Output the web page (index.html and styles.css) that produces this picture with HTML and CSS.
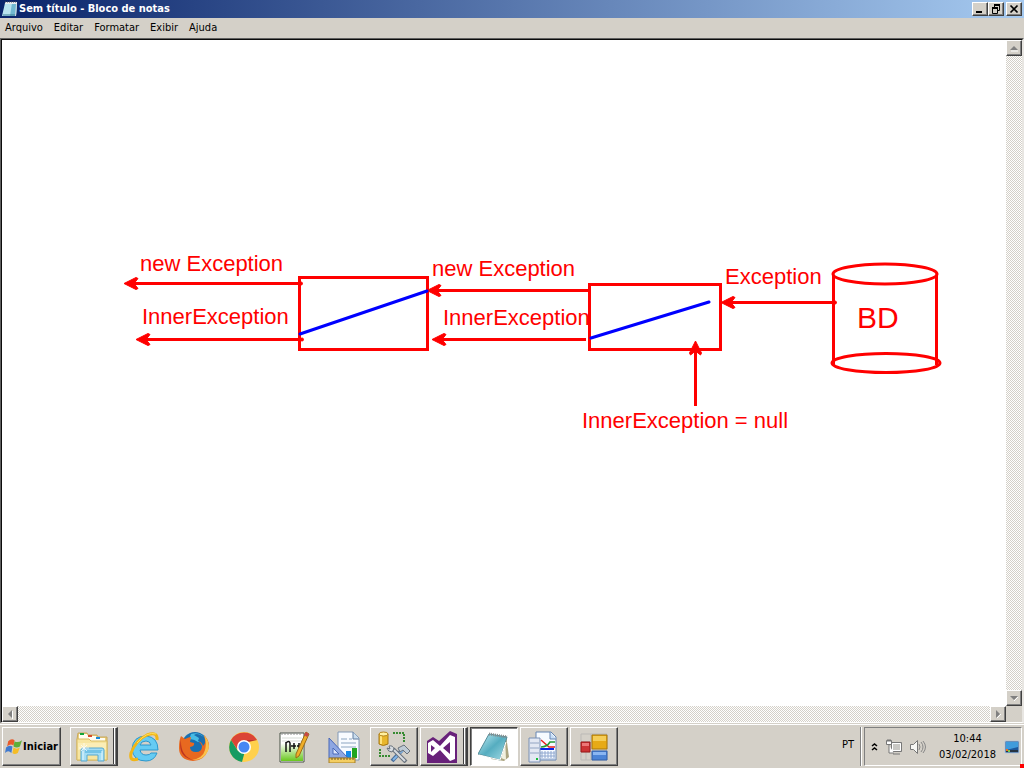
FILE: index.html
```html
<!DOCTYPE html>
<html lang="pt">
<head>
<meta charset="utf-8">
<title>Sem título - Bloco de notas</title>
<link rel="stylesheet" href="styles.css">
</head>
<body>
<main class="window">
  <header class="titlebar">
    <svg class="title-icon" viewBox="0 0 16 16" aria-hidden="true"><path d="M3 2h12l-1 13H0z" fill="#b9e3ee"/><path d="M10 2h5l-1 13H8z" fill="#72b9d0"/><path d="M1 14h13" stroke="#397b91"/><path d="M3 2h12" stroke="#e9edf0" stroke-width="2"/><path d="M3 1h12" stroke="#555" stroke-dasharray="1 1"/><path d="M14.500 3l-1 12" stroke="#d5dce0"/></svg>
    <h1 class="title">Sem título - Bloco de notas</h1>
    <div class="controls">
      <button class="bevel control" aria-label="Minimizar"><svg viewBox="0 0 12 10"><path d="M2 8h6" stroke="#000" stroke-width="2"/></svg></button>
      <button class="bevel control" aria-label="Restaurar"><svg viewBox="0 0 12 10"><path d="M4 1h6M2 4h6" stroke="#000" stroke-width="2"/><path d="M4.500 2v1M9.500 1v5.500H8M2.500 4v5.500h5V4" fill="none" stroke="#000"/></svg></button>
      <button class="bevel control close" aria-label="Fechar"><svg viewBox="0 0 12 10"><path d="M2.500 1.500l7 7m0-7l-7 7" stroke="#000" stroke-width="1.700"/></svg></button>
    </div>
  </header>
  <nav class="menu" aria-label="Menu">
    <button>Arquivo</button><button>Editar</button><button>Formatar</button><button>Exibir</button><button>Ajuda</button>
  </nav>
  <section class="editor">
    <textarea class="text" aria-label="Texto"></textarea>
    <div class="scroll vertical">
      <button class="bevel arrow" aria-label="Para cima"><svg viewBox="0 0 12 12"><path d="M3 9h7" stroke="#fff"/><path d="M2 8l4-4 4 4z" fill="#808080"/></svg></button>
      <button class="bevel arrow" aria-label="Para baixo"><svg viewBox="0 0 12 12"><path d="M6 9l4-4" stroke="#fff"/><path d="M2 4h8L6 8z" fill="#808080"/></svg></button>
    </div>
    <div class="scroll horizontal">
      <button class="bevel arrow" aria-label="Para a esquerda"><svg viewBox="0 0 12 12"><path d="M8.500 3v8" stroke="#fff"/><path d="M8 2v8L4 6z" fill="#808080"/></svg></button>
      <button class="bevel arrow" aria-label="Para a direita"><svg viewBox="0 0 12 12"><path d="M5 10l4-4" stroke="#fff"/><path d="M4 2v8l4-4z" fill="#808080"/></svg></button>
    </div>
  </section>
</main>

<svg class="drawing" viewBox="0 0 1024 768" preserveAspectRatio="xMinYMin meet" role="img" aria-label="Fluxo de exceções">
  <g class="red-line">
    <path d="M299.500 277.500h128v72h-128zM589.500 284.500h131v65h-131z"/>
    <path d="M129 283.500h172M141 339.500h161M433 290.500h156M437 339.500h149M727 302.500h108M695.500 406v-58"/>
    <path d="M833.500 275v91M936.500 275v90"/>
    <ellipse cx="885" cy="274" rx="52" ry="10"/>
    <ellipse cx="886" cy="363" rx="54" ry="9.500"/>
  </g>
  <g class="heads">
    <path id="head" d="M124 283.500l12-6 2 1-4 5 4 5-2 1z"/>
    <use href="#head" x="12" y="56"/>
    <use href="#head" x="303" y="7"/>
    <use href="#head" x="308" y="56"/>
    <use href="#head" x="597" y="19"/>
    <path d="M695.500 341l-6 12 1 2 5-4 5 4 1-2z"/>
    <circle cx="301" cy="283.500" r="1.500"/><circle cx="302" cy="339.500" r="1.500"/><circle cx="835" cy="302.500" r="1.500"/>
  </g>
  <path class="blue-line" d="M300 334l127-43M591 338l118-36"/>
  <g class="labels">
    <text x="140" y="271">new Exception</text>
    <text x="142" y="324">InnerException</text>
    <text x="432" y="276">new Exception</text>
    <text x="443" y="325">InnerException</text>
    <text x="725" y="284">Exception</text>
    <text x="582" y="428">InnerException = null</text>
    <text class="database" x="857" y="328">BD</text>
  </g>
</svg>

<footer class="taskbar">
  <button class="bevel start"><svg viewBox="0 0 16 16" aria-hidden="true"><path d="M3 3q3-3 6-1L8 7Q5 5 2 8z" fill="#e75a2b"/><path d="M9 3q3 2 7-1l-2 6q-3 2-6 0z" fill="#5cae38"/><path d="M1 9q3-3 6-1l-1 6Q3 11 0 14z" fill="#3f79cf"/><path d="M8 9q3 2 6 0l-2 5q-3 2-5 0z" fill="#f5bd27"/></svg>Iniciar</button>
  <div class="apps">
    <button class="bevel app stacked" aria-label="Explorador"><svg viewBox="0 0 32 32"><path d="M1 8l1-6h9l1 2h9l1 2h9v23H1z" fill="#e9cf7d" stroke="#c9a85b"/><path d="M3 3h8l1 2h8l1 2h8v3H3z" fill="#fffdf2"/><path d="M4 2h4v2H4z" fill="#13a538"/><path d="M12 4h4v2h-4z" fill="#d84b2b"/><path d="M20 6h4v2h-4z" fill="#1589da"/><path d="M1 8h12l2 2h16v19H1z" fill="#f7e5a0" stroke="#d9bb63"/><path d="M2 12h28v7H2z" fill="#fbedb6"/><path d="M5 30V19q0-2 2-2h19q2 0 2 2v11h-6v-6H11v6z" fill="#a4ddf4" stroke="#56a8d0"/><path d="M7 19h19v3H7z" fill="#72c3e7"/><path d="M7 20v9M26 20v9" stroke="#e3f8ff"/><path d="M8 12v10M3 17h10M5 14l6 6m0-6l-6 6" stroke="#fff" stroke-width=".7"/></svg></button>
    <button class="app plain" aria-label="Internet Explorer"><svg viewBox="0 0 32 32"><path d="M30 19H12q1 5 6 5 4 0 5-2h6q-3 8-11 8Q5 30 4 18 5 5 18 5q12 1 12 14zM12 14h11q-1-4-5-4-5 0-6 4z" fill="#65cbf3" stroke="#2c97cc"/><path d="M29 9q1-9-10-5Q8 9 3 22q-2 9 7 6" fill="none" stroke="#f1b516" stroke-width="3"/><path d="M28 3q-9-3-19 9" fill="none" stroke="#ffdf59"/></svg></button>
    <button class="app plain" aria-label="Firefox"><svg viewBox="0 0 32 32"><circle cx="17" cy="14" r="13" fill="#1770b2"/><path d="M13 3q10-3 15 6l-8 2q-6-4-9-2z" fill="#47bce5"/><path d="M3 5l4 3q4-2 6-2l-1 5 4 1q1 3-4 4 0 5 6 5 6 0 6-6-1-3-3-4 7-1 5-7 7 7 4 15-4 11-15 11Q1 29 1 17 1 9 3 5z" fill="#e86920"/><path d="M20 10q4 1 5 5 4-4 1-9-7-5-10-2l5 3z" fill="#1b6eae"/><path d="M26 4q7 8 4 16-5 10-16 9 11-2 13-10 2-8-1-15z" fill="#fac24b"/><path d="M3 8q-4 18 12 21Q2 25 3 8z" fill="#bd3320"/></svg></button>
    <button class="app plain" aria-label="Chrome"><svg viewBox="0 0 32 32"><circle cx="16" cy="16" r="15" fill="#ffd04c"/><path d="M3 9a15 15 0 0 1 26 0H16L9 18z" fill="#db4437"/><path d="M3 9l7 11h7l-3 11A15 15 0 0 1 3 9z" fill="#169b62"/><path d="M16 9h13L16 12z" fill="#ba3329"/><circle cx="16" cy="16" r="7" fill="#fff"/><circle cx="16" cy="16" r="5.500" fill="#4687f4"/></svg></button>
    <button class="app plain" aria-label="Notepad++"><svg viewBox="0 0 32 32"><defs><linearGradient id="lime" x2="0" y2="1"><stop stop-color="#fff"/><stop offset="1" stop-color="#69c81d"/></linearGradient></defs><path d="M2 2h24v29H2z" fill="#fff" stroke="#465044"/><path d="M3 12h22v18H3z" fill="url(#lime)"/><path d="M4 1v3M7 1v3M10 1v3M13 1v3M16 1v3M19 1v3M22 1v3" stroke="#929292"/><path d="M4 7h20M4 10h20" stroke="#d7dcd7"/><path d="M8 21V11v1q3-3 4 0v9M13 15h5m-2-3v6m3-3h4m-2-3v6" fill="none" stroke="#111" stroke-width="1.500"/><path d="M28 1l3 2-10 22-3 2v-4z" fill="#efae28" stroke="#9a6b19"/><path d="M28 1l3 2-2 3-3-2z" fill="#c74747"/></svg></button>
    <button class="app plain" aria-label="Medidas"><svg viewBox="0 0 32 32"><path d="M10 1h15l6 6v22H10z" fill="#f8fbff" stroke="#8299b6"/><path d="M25 1v7h6" fill="#c8dced" stroke="#637c9e"/><path d="M13 8h6m2 0h3M13 12h15M13 16h15" stroke="#8ca5c1"/><path d="M18 20h5v7h-5z" fill="#1689e9"/><path d="M24 17h5v10h-5z" fill="#20a522"/><path d="M1 7v20h19z" fill="#8ea7e2" stroke="#4968b8"/><path d="M5 17v6h6z" fill="#dce5fc" stroke="#4968b8"/><path d="M1 27h26v5H1z" fill="#f4ce62" stroke="#a77e25"/><path d="M4 27v2m3-2v2m3-2v2m3-2v2m3-2v2m3-2v2m3-2v2m3-2v2" stroke="#765c25"/></svg></button>
    <button class="bevel app" aria-label="Ferramentas de dados"><svg viewBox="0 0 32 32"><path d="M15 2h11v10M2 18v7h11" fill="none" stroke="#378b32" stroke-width="2" stroke-dasharray="2 1"/><path d="M1 3v10q4 3 9 0V3z" fill="#e8b62b" stroke="#a77814"/><path d="M3 5v8" stroke="#ffe37b" stroke-width="2"/><ellipse cx="5.500" cy="3" rx="4.500" ry="2" fill="#fff0a0" stroke="#b5841b"/><path d="M14 30l11-12" stroke="#476d9b" stroke-width="4"/><path d="M15 29l10-10" stroke="#83b5e6" stroke-width="2"/><path d="M15 18l13 13" stroke="#69727c" stroke-width="4"/><path d="M16 19l11 11" stroke="#d7dce1" stroke-width="2"/><path d="M11 15q4-1 5 3l-2 3q-4 0-5-4l3 1z" fill="#d7dce1" stroke="#69727c"/><path d="M20 17l6-3 6 6-3 3-4-4-3 2z" fill="#bfcbd5" stroke="#69727c"/></svg></button>
    <button class="bevel app stacked" aria-label="Visual Studio"><svg viewBox="0 0 32 32"><path d="M1 10l6-4 6 4 11-10 7 3v29H1z" fill="#68217a"/><path d="M2 12l5-3 7 6L24 4l5 2v22l-5 2-10-11-7 6-5-3zM5 14v7l4-4zM24 11l-7 6 7 6z" fill="#fff" fill-rule="evenodd"/></svg></button>
    <button class="bevel app active" aria-label="Bloco de notas"><svg viewBox="0 0 32 32"><defs><linearGradient id="notes" x2="1" y2="1"><stop stop-color="#c7eff6"/><stop offset=".5" stop-color="#55adc0"/><stop offset="1" stop-color="#a5dce6"/></linearGradient></defs><path d="M28 4l3 22-5 4-13-2z" fill="#aba480"/><path d="M27 5l1 24-5-2z" fill="#f1f0df"/><path d="M11 3l18 3-7 23L0 23z" fill="url(#notes)" stroke="#548b98"/><path d="M1 24l21 5 6-18" fill="none" stroke="#fff"/><path d="M11 3l18 3" stroke="#858d8e" stroke-width="3" stroke-dasharray="1 1"/></svg></button>
    <button class="bevel app" aria-label="Monitor de desempenho"><svg viewBox="0 0 32 32"><path d="M8 1h15l5 5v23H8z" fill="#f7fbff" stroke="#6686b3"/><path d="M22 1v7h6" fill="#c8def6" stroke="#6686b3"/><path d="M13 9l8 7h6" fill="none" stroke="#e92020" stroke-width="1.500"/><path d="M13 16q6 0 9-5h5" fill="none" stroke="#259a36" stroke-width="1.500"/><path d="M12 18h14" stroke="#0824e8" stroke-width="2"/><path d="M14 20v7m3-7v7m3-7v7m3-7v7m3-7v7M12 22h15M12 25h15M12 28h15" stroke="#90a8d0"/><path d="M1 7h11v24H1z" fill="#e3e8f3" stroke="#7890b5"/><path d="M2 12h9M2 17h9M2 22h9" stroke="#92a4c2"/><path d="M8 27h2v2H8z" fill="#16bd37"/></svg></button>
    <button class="bevel app" aria-label="Aplicativo"><svg viewBox="0 0 32 32"><path d="M3 3h26v26H3zM13 3v26M3 11h26M3 21h26M8 21v8" fill="none" stroke="#bbb9b6"/><path d="M14 4h15v14H14z" fill="#e7aa16" stroke="#a97609"/><path d="M15 5h13v5H15z" fill="#f5cd57"/><path d="M3 11h9v10H3z" fill="#cc3434" stroke="#981717"/><path d="M4 12h7v3H4z" fill="#ec7777"/><path d="M14 20h15v9H14z" fill="#4c84d6" stroke="#315ea8"/><path d="M15 21h13v3H15z" fill="#8bb6f1"/></svg></button>
  </div>
  <button class="language" aria-label="Idioma PT">PT</button>
  <section class="tray">
    <button class="tray-button chevron" aria-label="Mostrar ícones"><svg viewBox="0 0 7 10"><path d="M1 4l2.500-2L6 4M1 8l2.500-2L6 8" fill="none" stroke="#000" stroke-width="1.600"/></svg></button>
    <button class="tray-button" aria-label="Rede"><svg viewBox="0 0 16 16"><path d="M5.500 3.500h10v9h-10zM7 15h7" fill="#c9c8c4" stroke="#777"/><path d="M6.500 4.500h8v7h-8z" fill="none" stroke="#fff"/><path d="M.5 1.500h5v4h-5zM3 6v8h5" fill="#fff" stroke="#777"/><path d="M2 0v3M4 0v3" stroke="#777"/></svg></button>
    <button class="tray-button" aria-label="Volume"><svg viewBox="0 0 16 16"><path d="M.5 5.500h3l4-4v13l-4-4h-3z" fill="#f7f7f4" stroke="#777"/><path d="M9 5q2 3 0 6M11 3q4 5 0 10M13 2q5 6 0 12" fill="none" stroke="#888"/></svg></button>
    <div class="clock"><time>10:44</time><time datetime="2018-02-03">03/02/2018</time></div>
    <button class="tray-button desktop" aria-label="Mostrar área de trabalho"><svg viewBox="0 0 16 16"><path d="M1 2h14v12H1z" fill="#1b579c" stroke="#b8c7d8"/><path d="M2 3h12v5L2 11z" fill="#3f9bdc"/><path d="M2 11h12v2H2z" fill="#243342"/><path d="M2 10h2v2H2z" fill="#ed6c25"/><path d="M4 11h2v2H4z" fill="#77c94b"/></svg></button>
  </section>
  <span class="corner"></span>
</footer>
</body>
</html>
```
FILE: styles.css
```css
* { box-sizing: border-box; }
html, body { height: 100%; }
body {
  margin: 0;
  display: flex;
  flex-direction: column;
  overflow: hidden;
  position: relative;
  background: #d4d0c8;
  color: #000;
  font: 11px/14px "DejaVu Sans Condensed", "DejaVu Sans", sans-serif;
}
button { margin: 0; padding: 0; border: 0; background: none; color: inherit; font: inherit; }
svg { display: block; }
.bevel {
  background: #d4d0c8;
  border: 1px solid;
  border-color: #fff #404040 #404040 #fff;
  box-shadow: inset -1px -1px #808080;
}
.window { flex: 1; min-height: 0; display: flex; flex-direction: column; }
.titlebar {
  height: 18px;
  display: flex;
  align-items: center;
  padding: 0 2px;
  gap: 1px;
  background: linear-gradient(90deg, #0a246a, #a6caf0);
  color: #fff;
}
.title-icon { width: 16px; height: 16px; }
.title { flex: 1; margin: 0; font-size: 11px; line-height: 18px; font-weight: bold; }
.controls { display: flex; }
.control { width: 16px; height: 14px; }
.control svg { width: 12px; height: 10px; margin: 0 1px; }
.close { margin-left: 2px; }
.menu { height: 20px; display: flex; align-items: center; padding-left: 5px; gap: 11px; }
.editor {
  flex: 1;
  min-height: 0;
  display: grid;
  grid-template-columns: 1fr 16px;
  grid-template-rows: 1fr 16px;
  border: 2px solid;
  border-color: #808080 #e8e6e2 #fff #808080;
  border-bottom-width: 1px;
}
.text { width: 100%; height: 100%; resize: none; border: 0; outline: 0; padding: 2px; background: #fff; }
.scroll { display: flex; justify-content: space-between; background: repeating-conic-gradient(#fff 0 25%, #d4d0c8 0 50%) 0 0 / 2px 2px; }
.vertical { flex-direction: column; }
.arrow { width: 16px; height: 16px; }
.arrow svg { width: 12px; height: 12px; margin: 0 1px; }
.editor { border-top-style: ridge; border-left-style: ridge; border-top-color: #606060; border-left-color: #606060; }
.drawing { position: absolute; left: 0; top: 0; width: 1024px; height: 768px; pointer-events: none; }
.red-line { fill: none; stroke: #f00; stroke-width: 3; }
.heads { fill: #f00; stroke: #f00; }
.blue-line { fill: none; stroke: #00f; stroke-width: 3; stroke-linecap: round; }
.labels { fill: #f00; font: 22px "Liberation Sans", Arial, sans-serif; }
.database { font-size: 30px; }
.taskbar {
  height: 45px;
  flex: none;
  display: flex;
  align-items: stretch;
  position: relative;
  padding: 4px 2px 2px;
  background: #d4d0c8;
  box-shadow: inset 0 1px #d4d0c8, inset 0 2px #fff;
}
.start { width: 59px; display: flex; align-items: center; justify-content: center; gap: 1px; font-weight: bold; }
.start svg { width: 17px; height: 17px; }
.apps { flex: 1; display: flex; gap: 2px; padding-left: 9px; }
.app { width: 48px; display: grid; place-items: center; }
.app svg { width: 32px; height: 32px; }
.stacked { padding-right: 3px; border-right-width: 2px; background: linear-gradient(90deg, transparent 42px, #404040 42px 43px, #fff 43px 44px, transparent 44px); }
.active { border-color: #404040 #fff #fff #404040; background: #fff; box-shadow: inset 1px 1px #808080; }
.language { width: 22px; margin-right: 3px; text-align: right; padding: 0 6px 4px 0; border-right: 1px solid #808080; box-shadow: 1px 0 #fff; white-space: nowrap; }
.tray { display: flex; align-items: center; gap: 8px; padding: 0 1px 0 6px; border: 1px solid; border-color: #808080 #fff #fff #808080; }
.tray-button svg { width: 16px; height: 16px; }
.chevron svg { width: 7px; height: 10px; }
.clock { flex: 1; display: flex; flex-direction: column; align-items: center; gap: 2px; padding-left: 5px; }
.corner { position: absolute; right: 0; bottom: 0; width: 4px; height: 4px; background: #f00; }
```
